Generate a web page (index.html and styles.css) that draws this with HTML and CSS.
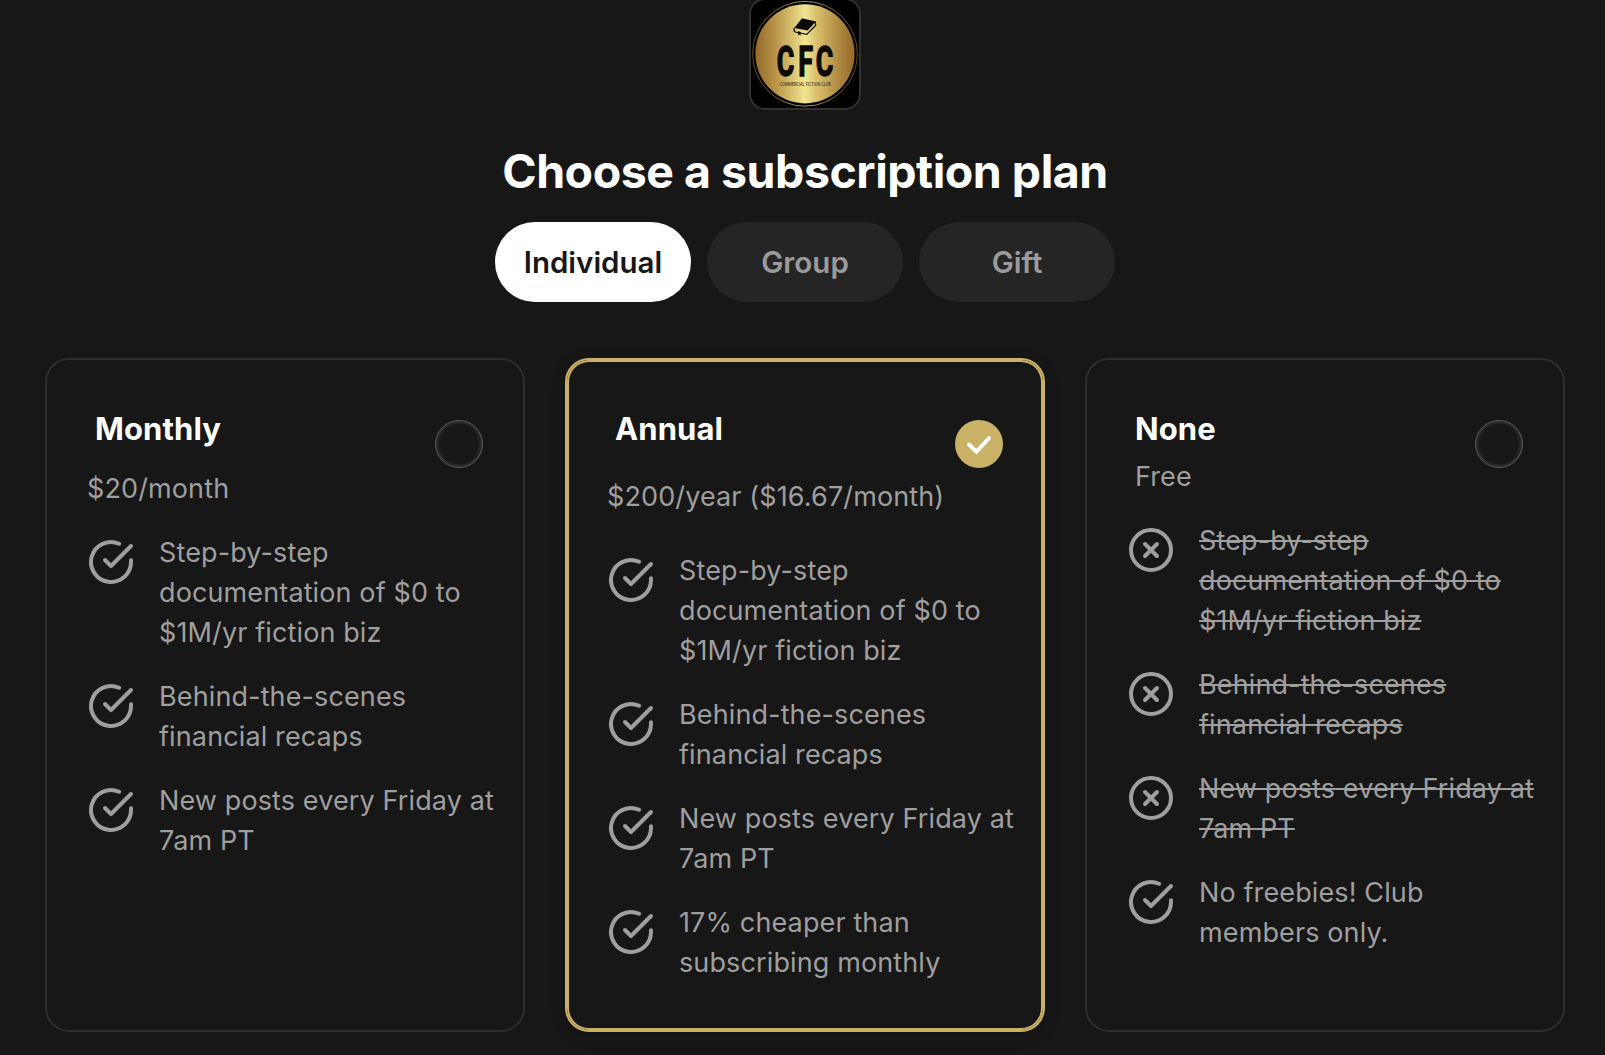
FILE: index.html
```html
<!DOCTYPE html>
<html lang="en">
<head>
    <meta charset="UTF-8">
    <meta name="viewport" content="width=device-width, initial-scale=1.0">
    <title>Choose a subscription plan</title>
    <link rel="stylesheet" href="styles.css">
</head>
<body>
    <!-- shared icons -->
    <svg class="sprite" aria-hidden="true">
        <symbol id="icon-check" viewBox="0 0 24 24">
            <path d="M22 11.08V12a10 10 0 1 1-5.93-9.14"/>
            <polyline points="22 4 12 14.01 9 11.01"/>
        </symbol>
        <symbol id="icon-x" viewBox="0 0 24 24">
            <circle cx="12" cy="12" r="10"/>
            <path d="M15 9l-6 6M9 9l6 6"/>
        </symbol>
    </svg>

    <main class="page">
        <svg class="logo" viewBox="0 0 112 112" role="img" aria-label="Commercial Fiction Club">
            <defs>
                <linearGradient id="gold" x1="0" x2="1" y1="0" y2="0">
                    <stop offset="0" stop-color="#946a2c"/>
                    <stop offset="0.2" stop-color="#b89347"/>
                    <stop offset="0.5" stop-color="#f0e590"/>
                    <stop offset="0.62" stop-color="#d9bf6c"/>
                    <stop offset="0.88" stop-color="#a9803a"/>
                    <stop offset="1" stop-color="#94692d"/>
                </linearGradient>
            </defs>
            <rect x="1" y="1" width="110" height="110" rx="15" fill="#000" stroke="#303030" stroke-width="2"/>
            <circle cx="56" cy="55.8" r="52.4" fill="none" stroke="url(#gold)" stroke-width="0.9" opacity="0.75"/>
            <circle cx="56" cy="55.8" r="49.6" fill="url(#gold)"/>
            <!-- book -->
            <path d="M45.3 30 53 20.3l14 3.2-8.5 9z" fill="#0b0a06"/>
            <path d="M45.3 30q-1 3.4 1 4l11.4 2.4 9.1-9.2-.6-3.4" fill="none" stroke="#0b0a06" stroke-width="1.2"/>
            <path d="M49.2 33v4.6l1.4-1 1 1.4v-4z" fill="#0b0a06"/>
            <text class="logo-name" transform="scale(0.64 1)" x="43.4 77 104.2" y="77.6">CFC</text>
            <text class="logo-sub" x="30.7" y="87.8" textLength="51" lengthAdjust="spacingAndGlyphs">COMMERCIAL FICTION CLUB</text>
        </svg>

        <h1>Choose a subscription plan</h1>

        <div class="tabs">
            <button class="tab active">Individual</button>
            <button class="tab">Group</button>
            <button class="tab">Gift</button>
        </div>

        <div class="plans">
            <section class="plan monthly">
                <span class="radio"></span>
                <h2>Monthly</h2>
                <p class="price">$20/month</p>
                <ul>
                    <li><svg class="icon"><use href="#icon-check"/></svg><span>Step-by-step<br>documentation of $0 to<br>$1M/yr fiction biz</span></li>
                    <li><svg class="icon"><use href="#icon-check"/></svg><span>Behind-the-scenes<br>financial recaps</span></li>
                    <li><svg class="icon"><use href="#icon-check"/></svg><span>New posts every Friday at<br>7am PT</span></li>
                </ul>
            </section>

            <section class="plan annual selected">
                <span class="radio">
                    <svg viewBox="0 0 48 48"><polyline points="14 24.5 21.5 31.7 34 18"/></svg>
                </span>
                <h2>Annual</h2>
                <p class="price">$200/year ($16.67/month)</p>
                <ul>
                    <li><svg class="icon"><use href="#icon-check"/></svg><span>Step-by-step<br>documentation of $0 to<br>$1M/yr fiction biz</span></li>
                    <li><svg class="icon"><use href="#icon-check"/></svg><span>Behind-the-scenes<br>financial recaps</span></li>
                    <li><svg class="icon"><use href="#icon-check"/></svg><span>New posts every Friday at<br>7am PT</span></li>
                    <li><svg class="icon"><use href="#icon-check"/></svg><span>17% cheaper than<br>subscribing monthly</span></li>
                </ul>
            </section>

            <section class="plan none">
                <span class="radio"></span>
                <h2>None</h2>
                <p class="price">Free</p>
                <ul>
                    <li class="off"><svg class="icon"><use href="#icon-x"/></svg><span>Step-by-step<br>documentation of $0 to<br>$1M/yr fiction biz</span></li>
                    <li class="off"><svg class="icon"><use href="#icon-x"/></svg><span>Behind-the-scenes<br>financial recaps</span></li>
                    <li class="off"><svg class="icon"><use href="#icon-x"/></svg><span>New posts every Friday at<br>7am PT</span></li>
                    <li><svg class="icon"><use href="#icon-check"/></svg><span>No freebies! Club<br>members only.</span></li>
                </ul>
            </section>
        </div>
    </main>
</body>
</html>
```
FILE: styles.css
```css
* {
    margin: 0;
    padding: 0;
    box-sizing: border-box;
}

body {
    font-family: Inter, 'Liberation Sans', sans-serif;
    background: #171717;
    color: #fff;
    height: 1055px;
    overflow: hidden;
}

.sprite {
    display: none;
}

.page {
    width: 1520px;
    margin-left: 45px;
    display: flex;
    flex-direction: column;
    align-items: center;
}

.logo {
    width: 112px;
    height: 112px;
    margin-top: -2px;
}

.logo-name {
    font-family: Roboto, sans-serif;
    font-weight: 700;
    font-size: 42px;
    fill: #0b0a06;
    stroke: #0b0a06;
    stroke-width: 1.4;
}

.logo-sub {
    font-family: Roboto, sans-serif;
    font-size: 4.6px;
    fill: #2b2410;
}

h1 {
    font-size: 46.5px;
    font-weight: 700;
    line-height: 60px;
    letter-spacing: -0.48px;
    margin-top: 31px;
}

.tabs {
    display: flex;
    gap: 16px;
    margin-top: 21px;
}

.tab {
    width: 196px;
    height: 80px;
    border: none;
    border-radius: 40px;
    background: #252525;
    color: #9b9b9b;
    font-family: inherit;
    font-size: 29.5px;
    font-weight: 600;
    cursor: pointer;
}

.tab.active {
    background: #fff;
    color: #171717;
}

.plans {
    display: grid;
    grid-template-columns: repeat(3, 480px);
    gap: 40px;
    margin-top: 56px;
}

.plan {
    position: relative;
    height: 674px;
    padding: 47px 0 0 40px;
    border: 2px solid #2e2e2e;
    border-radius: 24px;
    color: #9f9f9f;
}

.plan.selected {
    border-color: #c9b166;
    box-shadow: inset 0 0 0 2px #c9b166, 0 4px 16px rgba(0, 0, 0, 0.15);
}

.radio {
    position: absolute;
    top: 60px;
    right: 40px;
    width: 48px;
    height: 48px;
    border: 1px solid #5c5c5c;
    border-radius: 50%;
    box-shadow: inset 0 0 4px #555;
}

.selected .radio {
    border: none;
    box-shadow: none;
    background: #c9b166;
}

.radio svg {
    display: block;
    fill: none;
    stroke: #fff;
    stroke-width: 4;
    stroke-linecap: round;
}

h2 {
    color: #fff;
    font-size: 31px;
    font-weight: 700;
    line-height: 44px;
    margin-left: 8px;
    letter-spacing: 0.1px;
}

.price,
li {
    font-size: 27px;
    line-height: 40px;
    letter-spacing: 0.12px;
}

.price {
    margin-top: 18px;
}

ul {
    list-style: none;
    display: flex;
    flex-direction: column;
    gap: 24px;
    margin-top: 24px;
}

li {
    display: flex;
    gap: 24px;
    white-space: nowrap;
}

.annual .price {
    margin-top: 26px;
}

.annual ul {
    margin-top: 34px;
}

.none .price {
    margin: 6px 0 0 8px;
}

.off span {
    text-decoration: line-through;
    text-decoration-thickness: 2px;
}

.icon {
    flex: none;
    width: 48px;
    height: 48px;
    margin-top: 5px;
    fill: none;
    stroke: #9f9f9f;
    stroke-width: 2;
    stroke-linecap: round;
    stroke-linejoin: round;
}
```
